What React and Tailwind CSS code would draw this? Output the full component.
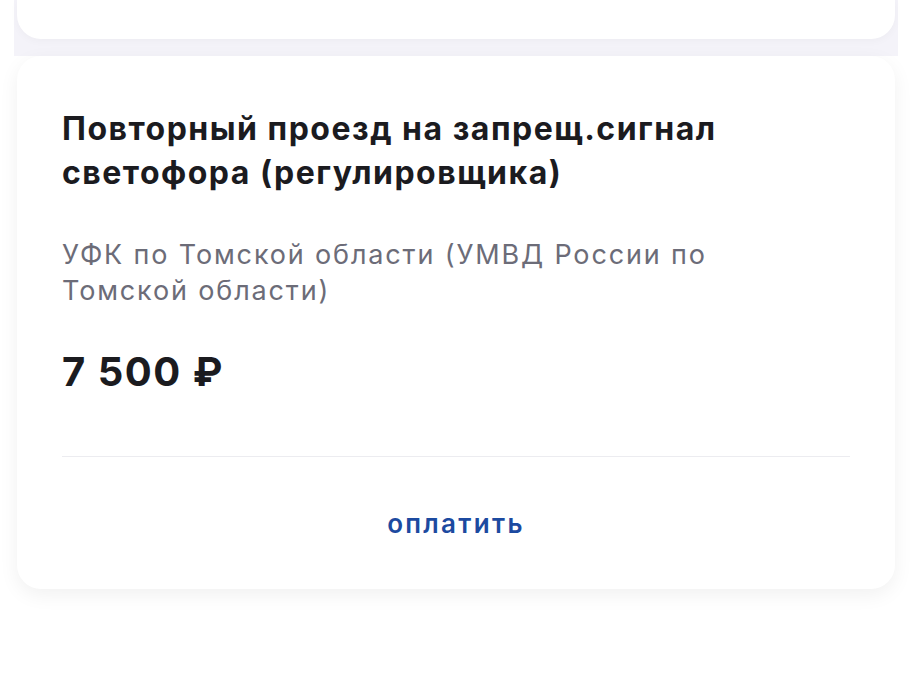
export default function App() {
  return (
    <div className="w-[912px] h-[689px] bg-white overflow-hidden" style={{ fontFamily: 'Inter, Roboto, "Noto Sans", sans-serif' }}>
      <div className="mx-[14px] px-[3px] pb-[17px] bg-[#f4f3f9]">
        <div className="h-[39px] bg-white rounded-b-[24px] shadow-[0_2px_8px_rgba(0,0,0,0.03)]" />
      </div>
      <div className="mx-[17px] bg-white rounded-[24px] shadow-[0_6px_20px_rgba(0,0,0,0.06)] px-[45px] pt-[51px]">
        <div className="text-[32px] leading-[44px] font-bold text-[#1b1b1f] tracking-[1.5px]">
          Повторный проезд на запрещ.сигнал<br />светофора (регулировщика)
        </div>
        <div className="mt-[42px] text-[27px] leading-[36px] text-[#6c6c78] tracking-[1.85px]">
          УФК по Томской области (УМВД России по<br />Томской области)
        </div>
        <div className="mt-[39px] text-[40px] leading-[48px] font-bold text-[#1b1b1f] tracking-[1.5px]">7 500 ₽</div>
        <div className="mt-[60px] h-px bg-[#ececf0]" />
        <div className="h-[132px] flex items-center justify-center">
          <span className="text-[26px] font-semibold text-[#1c4aa0] tracking-[2.3px]">оплатить</span>
        </div>
      </div>
    </div>
  );
}
